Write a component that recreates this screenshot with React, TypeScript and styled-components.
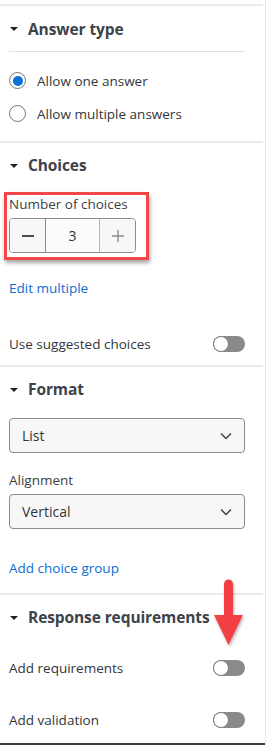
import React from "react";
import styled, { createGlobalStyle } from "styled-components";

const Global = createGlobalStyle`
  html, body { margin: 0; padding: 0; background: #ffffff; }
  body { font-family: "Open Sans", "Noto Sans", sans-serif; color: #32363a; }
  * { box-sizing: border-box; }
`;

const Panel = styled.div`
  width: 266px;
  height: 745px;
  border-right: 1px solid #e6e6e6;
  display: flex;
  flex-direction: column;
  padding-top: 4px;
  overflow: hidden;
`;

const Separator = styled.div<{ $mt?: number }>`
  height: 2px;
  margin-top: ${(p) => p.$mt ?? 0}px;
  margin-right: 2px;
  background: #ebebeb;
  flex: none;
`;

const BottomBar = styled.div`
  margin-top: auto;
  height: 2px;
  background: #3a3a3a;
  flex: none;
`;

const Section = styled.section`
  display: flex;
  flex-direction: column;
  padding: 0 20px 0 9px;
`;

const Header = styled.div<{ $h: number }>`
  height: ${(p) => p.$h}px;
  display: flex;
  align-items: center;
  gap: 10px;
  padding-left: 1px;
  font-size: 15.5px;
  font-weight: 700;
  color: #3d434a;
  letter-spacing: -0.1px;
`;

const Caret = styled.span`
  width: 0;
  height: 0;
  border-left: 4px solid transparent;
  border-right: 4px solid transparent;
  border-top: 4px solid #222;
  margin-top: 1px;
`;

const Divider = styled.div`
  height: 1px;
  background: #e2e2e2;
  margin-bottom: 12px;
`;

const RadioRow = styled.label`
  height: 33px;
  display: flex;
  align-items: center;
  gap: 11px;
  font-size: 13.5px;
  color: #32363a;
`;

const RadioCircle = styled.span<{ $checked?: boolean }>`
  width: 17px;
  height: 17px;
  border-radius: 50%;
  border: 1px solid #6f7276;
  background: #fff;
  display: flex;
  align-items: center;
  justify-content: center;
  flex: none;
  &::after {
    content: "";
    width: 10px;
    height: 10px;
    border-radius: 50%;
    background: ${(p) => (p.$checked ? "#0b6fd8" : "transparent")};
  }
`;

const Highlight = styled.div`
  margin: 5px 0 0 -5px;
  width: 145px;
  height: 68px;
  border: 3px solid #f2464b;
  box-shadow: 1px 3px 4px rgba(0, 0, 0, 0.35);
  padding: 0 0 0 2px;
  display: flex;
  flex-direction: column;
`;

const FieldLabel = styled.div<{ $mt?: number }>`
  height: ${(p) => (p.$mt !== undefined ? 20 : 18)}px;
  margin-top: ${(p) => p.$mt ?? 0}px;
  display: flex;
  align-items: center;
  font-size: 13.5px;
  color: #3a3f45;
`;

const Stepper = styled.div`
  margin-top: 5px;
  width: 127px;
  height: 35px;
  border: 1px solid #8c8c8c;
  border-radius: 4px;
  display: flex;
  overflow: hidden;
  background: #fff;
`;

const StepBtn = styled.div<{ $w: number; $side: "l" | "r" }>`
  width: ${(p) => p.$w}px;
  display: flex;
  align-items: center;
  justify-content: center;
  background: #f7f7f7;
  ${(p) => (p.$side === "l" ? "border-right: 1px solid #8c8c8c;" : "border-left: 1px solid #b5b5b5;")}
`;

const StepValue = styled.div`
  flex: 1;
  display: flex;
  align-items: center;
  justify-content: center;
  font-size: 14px;
  color: #32363a;
  background: #fbfbfb;
`;

const Link = styled.div<{ $mt: number }>`
  height: 20px;
  margin-top: ${(p) => p.$mt}px;
  display: flex;
  align-items: center;
  font-size: 13.5px;
  color: #0b6ed3;
`;

const ToggleRow = styled.div<{ $mt: number }>`
  height: 32px;
  margin-top: ${(p) => p.$mt}px;
  display: flex;
  align-items: center;
  justify-content: space-between;
  font-size: 13.5px;
  color: #32363a;
`;

const Toggle = styled.span`
  width: 32px;
  height: 16px;
  border-radius: 8px;
  background: #8a8a8a;
  position: relative;
  flex: none;
  &::after {
    content: "";
    position: absolute;
    left: 0;
    top: 0;
    width: 16px;
    height: 16px;
    border-radius: 50%;
    background: #fff;
    border: 1px solid #7d7d7d;
    box-sizing: border-box;
  }
`;

const Select = styled.div<{ $mt: number }>`
  height: 35px;
  margin-top: ${(p) => p.$mt}px;
  border: 1px solid #8c8c8c;
  border-radius: 4px;
  background: #f7f7f7;
  display: flex;
  align-items: center;
  justify-content: space-between;
  padding: 0 12px 0 12px;
  font-size: 14px;
  color: #32363a;
`;

const Spacer = styled.div<{ $h: number }>`
  height: ${(p) => p.$h}px;
  flex: none;
`;

const ArrowWrap = styled.div`
  position: absolute;
  left: 212px;
  top: 578px;
  width: 34px;
  height: 72px;
`;

const Minus = () => (
  <svg width="14" height="14" viewBox="0 0 14 14">
    <path d="M1 7h12" stroke="#4a4e53" strokeWidth="1.8" />
  </svg>
);

const Plus = () => (
  <svg width="14" height="14" viewBox="0 0 14 14">
    <path d="M1 7h12M7 1v12" stroke="#8a8d90" strokeWidth="1.4" />
  </svg>
);

const Chevron = () => (
  <svg width="12" height="8" viewBox="0 0 12 8">
    <path d="M1 1.5l5 5 5-5" stroke="#3a3f45" strokeWidth="1.4" fill="none" />
  </svg>
);

const RedArrow = () => (
  <ArrowWrap>
    <svg width="34" height="72" viewBox="0 0 34 72">
      <defs>
        <filter id="sh" x="-50%" y="-50%" width="200%" height="200%">
          <feDropShadow dx="1" dy="2" stdDeviation="1.5" floodColor="#000" floodOpacity="0.3" />
        </filter>
      </defs>
      <g filter="url(#sh)">
        <path d="M12 6 a4.5 4.5 0 0 1 9 0 V37 H12 Z" fill="#f23f45" />
        <path d="M2 37 H31 L16.5 67 Z" fill="#f23f45" />
      </g>
    </svg>
  </ArrowWrap>
);

export default function App() {
  return (
    <>
      <Global />
      <div style={{ position: "relative" }}>
        <Panel>
          <Separator />
          <Section>
            <Header $h={45}>
              <Caret />
              Answer type
            </Header>
            <Divider />
            <RadioRow>
              <RadioCircle $checked />
              Allow one answer
            </RadioRow>
            <RadioRow>
              <RadioCircle />
              Allow multiple answers
            </RadioRow>
          </Section>
          <Separator $mt={11} />
          <Section>
            <Header $h={44}>
              <Caret />
              Choices
            </Header>
            <Highlight>
              <FieldLabel>Number of choices</FieldLabel>
              <Stepper>
                <StepBtn $w={36} $side="l">
                  <Minus />
                </StepBtn>
                <StepValue>3</StepValue>
                <StepBtn $w={36} $side="r">
                  <Plus />
                </StepBtn>
              </Stepper>
            </Highlight>
            <Link $mt={18}>Edit multiple</Link>
            <ToggleRow $mt={30}>
              Use suggested choices
              <Toggle />
            </ToggleRow>
          </Section>
          <Separator $mt={5} />
          <Section>
            <Header $h={44}>
              <Caret />
              Format
            </Header>
            <Select $mt={7}>
              List
              <Chevron />
            </Select>
            <FieldLabel $mt={17}>Alignment</FieldLabel>
            <Select $mt={4}>
              Vertical
              <Chevron />
            </Select>
            <Link $mt={29}>Add choice group</Link>
          </Section>
          <Separator $mt={15} />
          <Section>
            <Header $h={44}>
              <Caret />
              Response requirements
            </Header>
            <ToggleRow $mt={13}>
              Add requirements
              <Toggle />
            </ToggleRow>
            <ToggleRow $mt={20}>
              Add validation
              <Toggle />
            </ToggleRow>
          </Section>
          <Spacer $h={7} />
          <BottomBar />
        </Panel>
        <RedArrow />
      </div>
    </>
  );
}
